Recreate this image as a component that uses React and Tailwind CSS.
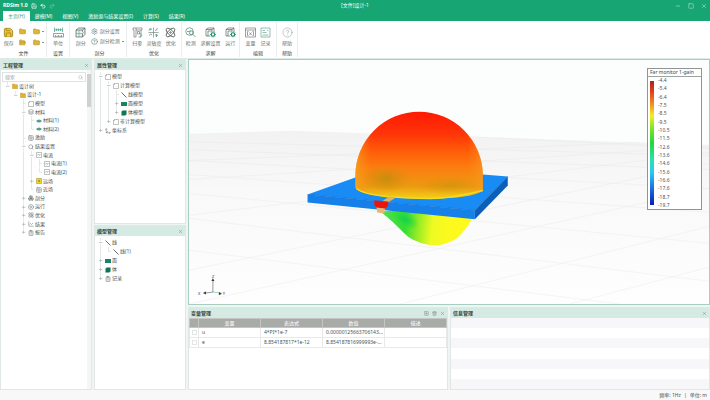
import React, { useState } from 'react';
import {
  Activity, Atom, Boxes, ChartLine, CircleHelp, CirclePlay, ClipboardList,
  Folder, FolderOpen, Grid2x2, Layers, Minus, Move3d, Redo2,
  Save, Search, Settings, Square, SquarePlus, Trash2, Undo2, X,
} from 'lucide-react';

const tabs = ['主页(H)', '建模(M)', '视图(V)', '激励源与结果设置(I)', '计算(S)', '结果(R)'];

const projectRows = [
  { depth: 0, label: '设计树', icon: 'folder', sign: '-' },
  { depth: 1, label: '设计-1', icon: 'folder', sign: '-' },
  { depth: 2, label: '模型', icon: 'square' },
  { depth: 2, label: '材料', icon: 'material', sign: '-' },
  { depth: 3, label: '材料(1)', icon: 'leaf' },
  { depth: 3, label: '材料(2)', icon: 'leaf' },
  { depth: 2, label: '激励', icon: 'grid' },
  { depth: 2, label: '结果设置', icon: 'search', sign: '-' },
  { depth: 3, label: '电流', icon: 'wave', sign: '-' },
  { depth: 4, label: '电流(1)', icon: 'wave' },
  { depth: 4, label: '电流(2)', icon: 'wave' },
  { depth: 3, label: '远场', icon: 'far', sign: '+' },
  { depth: 3, label: '近场', icon: 'grid' },
  { depth: 2, label: '剖分', icon: 'mesh', sign: '+' },
  { depth: 2, label: '运行', icon: 'run', sign: '+' },
  { depth: 2, label: '优化', icon: 'atom', sign: '+' },
  { depth: 2, label: '结果', icon: 'chart', sign: '+' },
  { depth: 2, label: '报告', icon: 'report', sign: '+' },
];

const propertyRows = [
  { depth: 0, label: '模型', icon: 'square', sign: '-' },
  { depth: 1, label: '计算模型', icon: 'square', sign: '-' },
  { depth: 2, label: '线模型', icon: 'line' },
  { depth: 2, label: '面模型', icon: 'face', sign: '+' },
  { depth: 2, label: '体模型', icon: 'solid', sign: '+' },
  { depth: 1, label: '非计算模型', icon: 'square', sign: '+' },
  { depth: 0, label: '坐标系', icon: 'axes', sign: '+' },
];

const modelRows = [
  { depth: 0, label: '线', icon: 'line', sign: '-' },
  { depth: 1, label: '线(1)', icon: 'line' },
  { depth: 0, label: '面', icon: 'face', sign: '+' },
  { depth: 0, label: '体', icon: 'solid', sign: '+' },
  { depth: 0, label: '记录', icon: 'report', sign: '+' },
];

const variables = [
  { name: 'u', expression: '4*PI*1e-7', value: '0.00000125663706143...' },
  { name: 'e', expression: '8.854187817*1e-12', value: '8.854187816999993e-...' },
];

const gainLabels = [
  '-4.4', '-5.4', '-6.4', '-7.5', '-8.5', '-9.5', '-10.5', '-11.5',
  '-12.6', '-13.6', '-14.6', '-15.6', '-16.6', '-17.6', '-18.7', '-19.7',
];

const lucideTreeIcons = {
  grid: Grid2x2,
  search: Search,
  mesh: Boxes,
  run: CirclePlay,
  atom: Atom,
  chart: ChartLine,
  report: ClipboardList,
  axes: Move3d,
  material: Layers,
};

const TreeIcon = ({ name }) => {
  const Icon = lucideTreeIcons[name];
  if (Icon) {
    return <Icon className="size-1.5 shrink-0 text-[#65706c]" strokeWidth={2} />;
  }

  return (
    <svg className="size-1.5 shrink-0" viewBox="0 0 12 12" fill="none">
      {name === 'folder' && <path d="M1 2h4l1 1.500h5v8H1z" fill="#e0b32e" stroke="#b88f1c" strokeWidth=".8" />}
      {name === 'square' && <path d="M3 1h8v10H1V3zM1 3h2V1" stroke="#7b8682" />}
      {name === 'wave' && <path d="M1 1h10v10H1zM3 7l2-3 2 3 2-3" stroke="#7b8682" />}
      {name === 'leaf' && <path d="M0 6q6-6 12 0-6 6-12 0z" fill="#4f9f88" />}
      {name === 'line' && <path d="M1 1l10 10" stroke="#3f4a46" strokeWidth="1.600" />}
      {name === 'face' && <path d="M0 2h12v8H0z" fill="#168465" />}
      {name === 'solid' && <path d="M1 3l3-2h7v8l-3 2H1z" fill="#0f7355" stroke="#75bba4" strokeWidth=".8" />}
      {name === 'far' && (
        <>
          <path d="M1 1h10v10H1z" fill="#f2dc1e" stroke="#8c8a2a" />
          <circle cx="6" cy="6" r="2.500" fill="#c9951e" />
        </>
      )}
    </svg>
  );
};

const Branch = ({ sign, last }) => (
  <svg className="mr-[2px] h-full w-[5px] shrink-0" viewBox="0 0 5 9" preserveAspectRatio="none" fill="none">
    <path d={last ? 'M2.500 0V4.500H5' : 'M2.500 0V9M2.500 4.500H5'} stroke="#d8dedb" strokeWidth=".7" />
    {sign && <path d="M1 3h3v3H1z" fill="#fff" />}
    {sign && <path d={sign === '+' ? 'M1 4.500h3M2.500 3v3' : 'M1 4.500h3'} stroke="#a9b3af" strokeWidth=".7" />}
  </svg>
);

// True when another row follows on the same level of the same branch
const continues = (rows, index, level) => {
  for (let i = index + 1; i < rows.length; i++) {
    if (rows[i].depth < level) return false;
    if (rows[i].depth === level) return true;
  }
  return false;
};

const Tree = ({ rows, className }) => (
  <ul className={`grid auto-rows-fr pl-[3px] ${className}`}>
    {rows.map((row, index) => (
      <li key={index} className="flex min-h-0 items-center overflow-hidden">
        {Array.from({ length: row.depth }, (_, level) => (
          <span key={level} className="h-full w-2 shrink-0 pl-[2px]">
            {continues(rows, index, level) && <span className="block h-full w-px bg-[#e3e8e6]" />}
          </span>
        ))}
        <Branch sign={row.sign} last={!continues(rows, index, row.depth)} />
        <TreeIcon name={row.icon} />
        <span className="ml-px whitespace-nowrap">{row.label}</span>
      </li>
    ))}
  </ul>
);

const Panel = ({ title, actions, className, children }) => (
  <section className={`flex min-w-0 flex-col border border-[#e0e7e4] bg-white ${className}`}>
    <header className="flex h-[10px] shrink-0 items-center bg-[#d5eae3] px-[2px]">
      <h2 className="font-bold text-[#34423d]">{title}</h2>
      <div className="ml-auto flex items-center gap-[3px] text-[#71827b]">
        {actions}
        <button type="button" aria-label="关闭"><X className="size-[5px]" /></button>
      </div>
    </header>
    {children}
  </section>
);

const RibbonGroup = ({ label, className, children }) => (
  <div className={`flex flex-col border-r border-[#e9eeec] ${className}`}>
    <div className="flex flex-1 items-center justify-around">{children}</div>
    <div className="pb-px text-center text-[#3e4744]">{label}</div>
  </div>
);

const RibbonButton = ({ label, children }) => (
  <button type="button" className="flex flex-col items-center gap-[3px] whitespace-nowrap text-[#6a7370]">
    {children}
    <span>{label}</span>
  </button>
);

const SmallButton = ({ label, icon: Icon, arrow }) => (
  <button type="button" className="flex items-center gap-[2px] whitespace-nowrap text-[#6a7370]">
    <Icon className="size-[7px] text-[#5c8277]" strokeWidth={2} />
    <span>{label}</span>
    {arrow && <span className="h-px w-[2px] bg-[#8a9490]" />}
  </button>
);

const CubeGear = () => (
  <svg className="size-[11px]" viewBox="0 0 22 22" fill="none" stroke="#4f5b57" strokeWidth="1.300">
    <path d="M2 5l4-3h12v8M2 5v13h8M2 5h12M6 8v10M14 5l4-3M14 5v4M6 8h8" />
    <circle cx="16" cy="15" r="3.500" fill="#fff" stroke="#168f68" strokeWidth="2.400" />
    <path d="M16 9v2M16 19v2M10 15h2M20 15h2M12 11l1 1M20 11l-1 1M12 19l1-1M20 19l-1-1" stroke="#168f68" strokeWidth="1.500" />
  </svg>
);

const Ribbon = () => (
  <div className="flex h-[38px] border-b border-[#dcebe5] bg-white py-px pl-px">
    <RibbonGroup label="文件" className="w-[46px]">
      <RibbonButton label="保存">
        <Save className="size-[11px] text-[#a88317]" fill="#edc83f" strokeWidth={2} />
      </RibbonButton>
      <div className="grid grid-cols-2 gap-x-[3px] gap-y-1">
        {[Folder, Folder, FolderOpen, Folder].map((Icon, i) => (
          <button key={i} type="button" aria-label="打开" className="flex items-center gap-[2px]">
            <Icon className="size-[7px] text-[#b08b1c]" fill="#dfb634" />
            {i % 2 === 1 && <span className="h-px w-[2px] bg-[#8a9490]" />}
          </button>
        ))}
      </div>
    </RibbonGroup>
    <RibbonGroup label="设置" className="w-[23px]">
      <RibbonButton label="单位">
        <svg className="size-[11px]" viewBox="0 0 22 22" fill="none" stroke="#65736e" strokeWidth="1.300">
          <path d="M3 1v9M19 1v9M7 3v5M11 3v5M15 3v5" stroke="#2f9b78" />
          <path d="M3 5.500h16M1 13h20v7H1zM5 16v4M8 17v3M11 16v4M14 17v3M17 16v4" />
        </svg>
      </RibbonButton>
    </RibbonGroup>
    <RibbonGroup label="剖分" className="w-[57px] pl-[3px]">
      <RibbonButton label="剖分">
        <svg className="size-[11px]" viewBox="0 0 22 22" fill="#e6f2ee" stroke="#47524e" strokeWidth="1.300">
          <path d="M2 6l5-4h13v13l-5 5H2zM2 6h13v14M15 6l5-4" />
          <path d="M8 6v14M2 13h13l5-5" stroke="#64aa95" />
        </svg>
      </RibbonButton>
      <div className="flex flex-col gap-[3px]">
        <SmallButton label="剖分设置" icon={Settings} />
        <SmallButton label="剖分检测" icon={CircleHelp} arrow />
      </div>
    </RibbonGroup>
    <RibbonGroup label="优化" className="w-[55px] px-[3px]">
      <RibbonButton label="扫参">
        <svg className="size-[11px]" viewBox="0 0 22 22" fill="none" stroke="#66716d" strokeWidth="1.300">
          <path d="M2 2h6v18H4V6H2zM8 2h12v4H8M18 6v14h-5M11 9h4v5h-4z" />
          <path d="M15 12l4 4-2 4" stroke="#319b78" />
        </svg>
      </RibbonButton>
      <RibbonButton label="灵敏度">
        <svg className="size-[11px]" viewBox="0 0 22 22" fill="none" stroke="#338d72" strokeWidth="1.400">
          <path d="M1 11h20M11 1v20" stroke="#7b8581" />
          <path d="M2 7q3-6 6-2M14 7q3 1 5-5M2 17q3-5 6-1M14 15q3 5 6 1M4 2v5M17 14v6" />
        </svg>
      </RibbonButton>
      <RibbonButton label="优化">
        <svg className="size-[11px]" viewBox="0 0 22 22" fill="none" stroke="#38423f" strokeWidth="1.500">
          <ellipse cx="11" cy="11" rx="11" ry="5" transform="rotate(45 11 11)" />
          <ellipse cx="11" cy="11" rx="11" ry="5" transform="rotate(-45 11 11)" />
          <circle cx="11" cy="11" r="1.500" />
        </svg>
      </RibbonButton>
    </RibbonGroup>
    <RibbonGroup label="求解" className="w-[58px] px-px">
      <RibbonButton label="检测">
        <svg className="size-[11px]" viewBox="0 0 22 22" fill="none" stroke="#45896f" strokeWidth="1.400">
          <circle cx="9" cy="9" r="7.500" />
          <circle cx="13" cy="12" r="4" />
          <path d="M16 15l5 5M4 9h5l2-3" />
        </svg>
      </RibbonButton>
      <RibbonButton label="求解设置"><CubeGear /></RibbonButton>
      <RibbonButton label="运行"><CubeGear /></RibbonButton>
    </RibbonGroup>
    <RibbonGroup label="编辑" className="w-[37px] px-[3px]">
      <RibbonButton label="变量">
        <svg className="size-[11px]" viewBox="0 0 22 22" fill="none" stroke="#65716d" strokeWidth="1.300">
          <path d="M1 2h20v18H1zM1 6h20M7 9H5v8h2M15 9h2v8h-2M9 11l4 5M13 11l-4 5" />
        </svg>
      </RibbonButton>
      <RibbonButton label="记录">
        <svg className="size-[11px]" viewBox="0 0 22 22" fill="none" stroke="#5e9a88" strokeWidth="1.300">
          <path d="M2 2h18v18H2zM5 7h5M5 11h8M5 16h12M14 6l3 2" />
        </svg>
      </RibbonButton>
    </RibbonGroup>
    <RibbonGroup label="帮助" className="w-[21px]">
      <RibbonButton label="帮助">
        <CircleHelp className="size-[11px] text-[#7f8986]" strokeWidth={1} />
      </RibbonButton>
    </RibbonGroup>
  </div>
);

// Ground plane, antenna substrate and the far field lobe
const domePath = 'M355 187V175A64 64 0 0 1 483 175V190C475 196 451 199 419 198 386 197 360 195 355 187z';

const Scene = () => (
  <svg className="absolute inset-0 size-full" viewBox="188 59 522 245" preserveAspectRatio="xMidYMid slice">
    <defs>
      <linearGradient id="ground" x1="0" y1="0" x2="0" y2="1">
        <stop offset="0" stopColor="#f2f2f2" />
        <stop offset=".35" stopColor="#f9f9f9" />
        <stop offset="1" stopColor="#fefefe" />
      </linearGradient>
      <linearGradient id="dome" x1="0" y1="0" x2="0" y2="1">
        <stop offset="0" stopColor="#ff1a04" />
        <stop offset=".25" stopColor="#ff3408" />
        <stop offset=".45" stopColor="#ff5c08" />
        <stop offset=".65" stopColor="#fb7f10" />
        <stop offset=".86" stopColor="#ec9a10" />
        <stop offset="1" stopColor="#f3cf18" />
      </linearGradient>
      <linearGradient id="domeEdge" x1="0" y1="1" x2="1" y2="1">
        <stop offset="0" stopColor="#f5a51d" stopOpacity=".7" />
        <stop offset=".12" stopColor="#f8931a" stopOpacity="0" />
        <stop offset=".88" stopColor="#f8931a" stopOpacity="0" />
        <stop offset="1" stopColor="#fa9a20" stopOpacity=".6" />
      </linearGradient>
      <radialGradient id="domeShade">
        <stop offset="0" stopColor="#b98d0c" stopOpacity=".75" />
        <stop offset="1" stopColor="#d08a0c" stopOpacity="0" />
      </radialGradient>
      <linearGradient id="lobe" gradientUnits="userSpaceOnUse" x1="382" y1="214" x2="450" y2="222">
        <stop offset="0" stopColor="#4fe04a" />
        <stop offset=".35" stopColor="#32dd36" />
        <stop offset=".55" stopColor="#98ec25" />
        <stop offset=".75" stopColor="#eefa22" />
        <stop offset="1" stopColor="#fdf91c" />
      </linearGradient>
      <radialGradient id="lobeShade">
        <stop offset="0" stopColor="#13cf56" />
        <stop offset="1" stopColor="#2bdc30" stopOpacity="0" />
      </radialGradient>
    </defs>
    <path d="M188 133L290 130 710 144V304H188z" fill="url(#ground)" />
    <g stroke="#e0e0e0" strokeWidth=".5" opacity=".55" fill="none">
      <path d="M188 141L710 155M188 149L710 169M188 160L710 188M188 174L710 212M188 193L710 243M188 218L710 281M188 250L620 304" />
      <path d="M710 148L470 136M710 163L188 270M710 188L188 304M710 152L188 215M710 146L188 179M710 226L400 304M710 267L570 304M640 142L188 160" />
    </g>
    <path d="M380 211Q394 222 403 232T430 245Q445 246 457 238 467 229 473 217L440 207z" fill="url(#lobe)" />
    <ellipse cx="405" cy="219" rx="15" ry="8" fill="url(#lobeShade)" transform="rotate(28 405 219)" />
    <path d="M307 194L355 177 483 174 508 176 475 210z" fill="#188bf5" />
    <path d="M307 194L475 210V219L307 202z" fill="#1680ea" />
    <path d="M475 210L508 176V185L475 219z" fill="#0b5fb9" />
    <path d="M307 194L475 210 508 176" fill="none" stroke="#1267c1" strokeWidth=".5" />
    <path d={domePath} fill="url(#dome)" />
    <path d={domePath} fill="url(#domeEdge)" />
    <ellipse cx="386" cy="178" rx="25" ry="14" fill="url(#domeShade)" />
    <ellipse cx="450" cy="185" rx="32" ry="9" fill="url(#domeShade)" opacity=".6" />
    <path d="M356 188Q364 194 386 196T430 198 483 190" fill="none" stroke="#f1dc20" strokeWidth="1.500" />
    <path d="M389 196l7 1-10 6-6-1z" fill="#dcb267" />
    <path d="M376 206h9l-1 7-7-1z" fill="#e2b978" />
    <path d="M374 200l14 1v4l-3 3-9-1-2-3z" fill="#eb160b" />
    <g stroke="#575757" strokeWidth=".6" fill="#333">
      <path d="M212 292V280M212 292l-8 1" />
      <path d="M212 292l9 1" stroke="#63bda0" />
      <path d="M212 278l1.500 3h-3zM202 293l3-1.500v3zM221 294l-3-2v3z" stroke="none" />
    </g>
    <g fontFamily="Noto Sans" fontSize="4" fill="#333">
      <text x="211" y="278">Z</text>
      <text x="197" y="295">X</text>
      <text x="222" y="295">Y</text>
    </g>
  </svg>
);

const Legend = () => (
  <div className="absolute top-2 right-[7px] w-[55px] border border-[#8f9593] bg-white text-[#4d5452]">
    <h3 className="border-b border-[#9da3a1] px-[2px] py-px text-[#3c4341] whitespace-nowrap">Far monitor 1-gain</h3>
    <div className="flex gap-1 px-[2px] py-px">
      <div className="my-[3px] w-1 bg-[linear-gradient(#a9261e,#e23a1c_8%,#f28a1c_18%,#f4ee20_28%,#7ee52a_38%,#21d83c_50%,#2de0b0_64%,#2bc8f0_74%,#1b6de0_87%,#0a1fa8)]" />
      <ul className="flex h-[130px] flex-col justify-between">
        {gainLabels.map(label => <li key={label}>{label}</li>)}
      </ul>
    </div>
  </div>
);

const VariableTable = () => (
  <table className="w-full table-fixed border-collapse text-left">
    <thead className="bg-[#a9aba9] text-center text-white">
      <tr className="h-[9px]">
        <th className="w-[9px] border border-[#c4c6c4]" />
        {['变量', '表达式', '数值', '描述'].map(name => (
          <th key={name} className="border border-[#c4c6c4] font-normal">{name}</th>
        ))}
      </tr>
    </thead>
    <tbody>
      {variables.map(item => (
        <tr key={item.name} className="h-[10px]">
          <td className="border border-[#e8eae9]">
            <input
              type="checkbox"
              aria-label={item.name}
              className="mx-auto block size-[5px] appearance-none border border-[#e3e6e5]"
            />
          </td>
          <td className="border border-[#e8eae9] px-[3px]">{item.name}</td>
          <td className="border border-[#e8eae9] px-[3px]">{item.expression}</td>
          <td className="border border-[#e8eae9] px-[3px] whitespace-nowrap">{item.value}</td>
          <td className="border border-[#e8eae9]" />
        </tr>
      ))}
    </tbody>
  </table>
);

const App = () => {
  const [activeTab, setActiveTab] = useState(tabs[0]);
  const [query, setQuery] = useState('');

  return (
    <div className="flex min-h-screen flex-col bg-[#f0f5f3] font-['Noto_Sans','Noto_Sans_CJK_SC',sans-serif] text-[5px] leading-none text-[#4a5350]">
      <header className="bg-[#17a673] text-white">
        <div className="grid h-[11px] grid-cols-[1fr_auto_1fr] items-center px-[3px]">
          <div className="flex items-center gap-[3px]">
            <span className="font-bold">RDSim 1.0</span>
            <button type="button" aria-label="保存"><Save className="size-1.5" /></button>
            <button type="button" aria-label="撤销"><Undo2 className="size-1.5" strokeWidth={3} /></button>
            <button type="button" aria-label="重做"><Redo2 className="size-1.5 opacity-50" /></button>
          </div>
          <h1>[文件]设计-1</h1>
          <div className="flex justify-end gap-[7px] text-[#c4eadb]">
            <button type="button" aria-label="最小化"><Minus className="size-1.5" /></button>
            <button type="button" aria-label="最大化"><Square className="size-1.5" /></button>
            <button type="button" aria-label="关闭"><X className="size-1.5" /></button>
          </div>
        </div>
        <nav className="flex h-[10px] pl-[3px]">
          {tabs.map(tab => (
            <button
              key={tab}
              type="button"
              onClick={() => setActiveTab(tab)}
              className={`px-[5px] ${tab === activeTab ? 'bg-white text-[#3aa381]' : 'text-white'}`}
            >
              {tab}
            </button>
          ))}
        </nav>
      </header>

      <Ribbon />

      <main className="flex flex-1 gap-[2px]">
        <Panel title="工程管理" className="w-[92px] shrink-0">
          <div className="flex flex-1">
            <div className="min-w-0 flex-1 pt-[2px] pl-px">
              <label className="flex h-[10px] items-center border border-[#dfe4e2] px-[2px]">
                <input
                  type="text"
                  value={query}
                  onChange={(e) => setQuery(e.target.value)}
                  placeholder="搜索"
                  aria-label="搜索"
                  className="min-w-0 flex-1 outline-none placeholder:text-[#9aa29f]"
                />
                <Search className="size-[5px] text-[#98a09d]" />
              </label>
              <Tree rows={projectRows} className="h-[155px]" />
            </div>
            <div className="ml-px w-1 bg-[#f4f6f5] pt-1">
              <div className="h-[33px] bg-[#cdd1cf]" />
            </div>
          </div>
        </Panel>

        <div className="flex w-[92px] shrink-0 flex-col gap-px">
          <Panel title="属性管理" className="flex-1">
            <Tree rows={propertyRows} className="mt-[2px] h-[63px]" />
          </Panel>
          <Panel title="模型管理" className="flex-1">
            <Tree rows={modelRows} className="mt-[2px] h-[45px]" />
          </Panel>
        </div>

        <div className="flex min-w-0 flex-1 flex-col gap-[2px]">
          <div className="relative flex-1 overflow-hidden border border-[#a6cfc1] bg-[#fcfefd]">
            <Scene />
            <Legend />
          </div>
          <div className="flex h-[83px] gap-[2px]">
            <Panel
              title="变量管理"
              className="flex-1"
              actions={(
                <>
                  <button type="button" aria-label="添加"><SquarePlus className="size-[5px]" /></button>
                  <button type="button" aria-label="删除"><Trash2 className="size-[5px]" /></button>
                </>
              )}
            >
              <VariableTable />
            </Panel>
            <Panel title="信息管理" className="flex-1">
              <div className="flex flex-1 flex-col">
                {Array.from({ length: 7 }, (_, i) => (
                  <div key={i} className="flex-1 odd:bg-[#f7f6f9]" />
                ))}
              </div>
            </Panel>
          </div>
        </div>
      </main>

      <footer className="flex h-[10px] items-center justify-end gap-[3px] bg-[#f8f8f9] px-[3px]">
        <span>频率: 1Hz</span>
        <span>|</span>
        <span>单位: m</span>
      </footer>
    </div>
  );
};

export default App;
